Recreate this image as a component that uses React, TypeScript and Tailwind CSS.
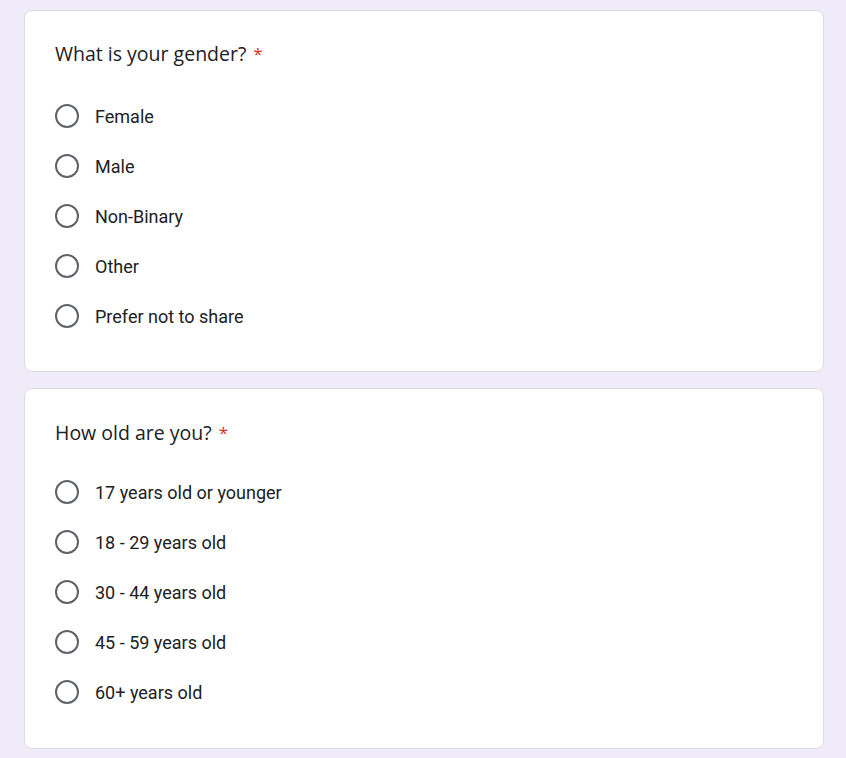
const questions = [
  {
    title: "What is your gender?",
    options: ["Female", "Male", "Non-Binary", "Other", "Prefer not to share"],
    pad: "pt-[31px] pb-[30px]",
    gap: "mt-[25px]",
  },
  {
    title: "How old are you?",
    options: [
      "17 years old or younger",
      "18 - 29 years old",
      "30 - 44 years old",
      "45 - 59 years old",
      "60+ years old",
    ],
    pad: "pt-[32px] pb-[31px]",
    gap: "mt-[22px]",
  },
];

export default function App() {
  return (
    <div className="min-h-screen bg-[#f0ebf8] px-[24px] pt-[10px] pb-[10px] flex flex-col gap-[16px]">
      {questions.map((q, i) => (
        <div
          key={i}
          className={`w-[800px] bg-white border border-[#dadce0] rounded-[8px] pl-[30px] ${q.pad}`}
        >
          <div
            className="h-[24px] flex items-center text-[19.5px] text-[#202124]"
            style={{ fontFamily: '"Open Sans", Roboto, sans-serif' }}
          >
            <span>{q.title}</span>
            <span className="ml-[7px] text-[#d93025] text-[17px]">*</span>
          </div>
          <div className={`${q.gap} flex flex-col`}>
            {q.options.map((opt) => (
              <label key={opt} className="h-[50px] flex items-center gap-[16px]">
                <span className="w-[24px] h-[24px] rounded-full border-2 border-[#5f6368] shrink-0" />
                <span
                  className="text-[18px] text-[#202124]"
                  style={{ fontFamily: "Roboto, sans-serif" }}
                >
                  {opt}
                </span>
              </label>
            ))}
          </div>
        </div>
      ))}
    </div>
  );
}
